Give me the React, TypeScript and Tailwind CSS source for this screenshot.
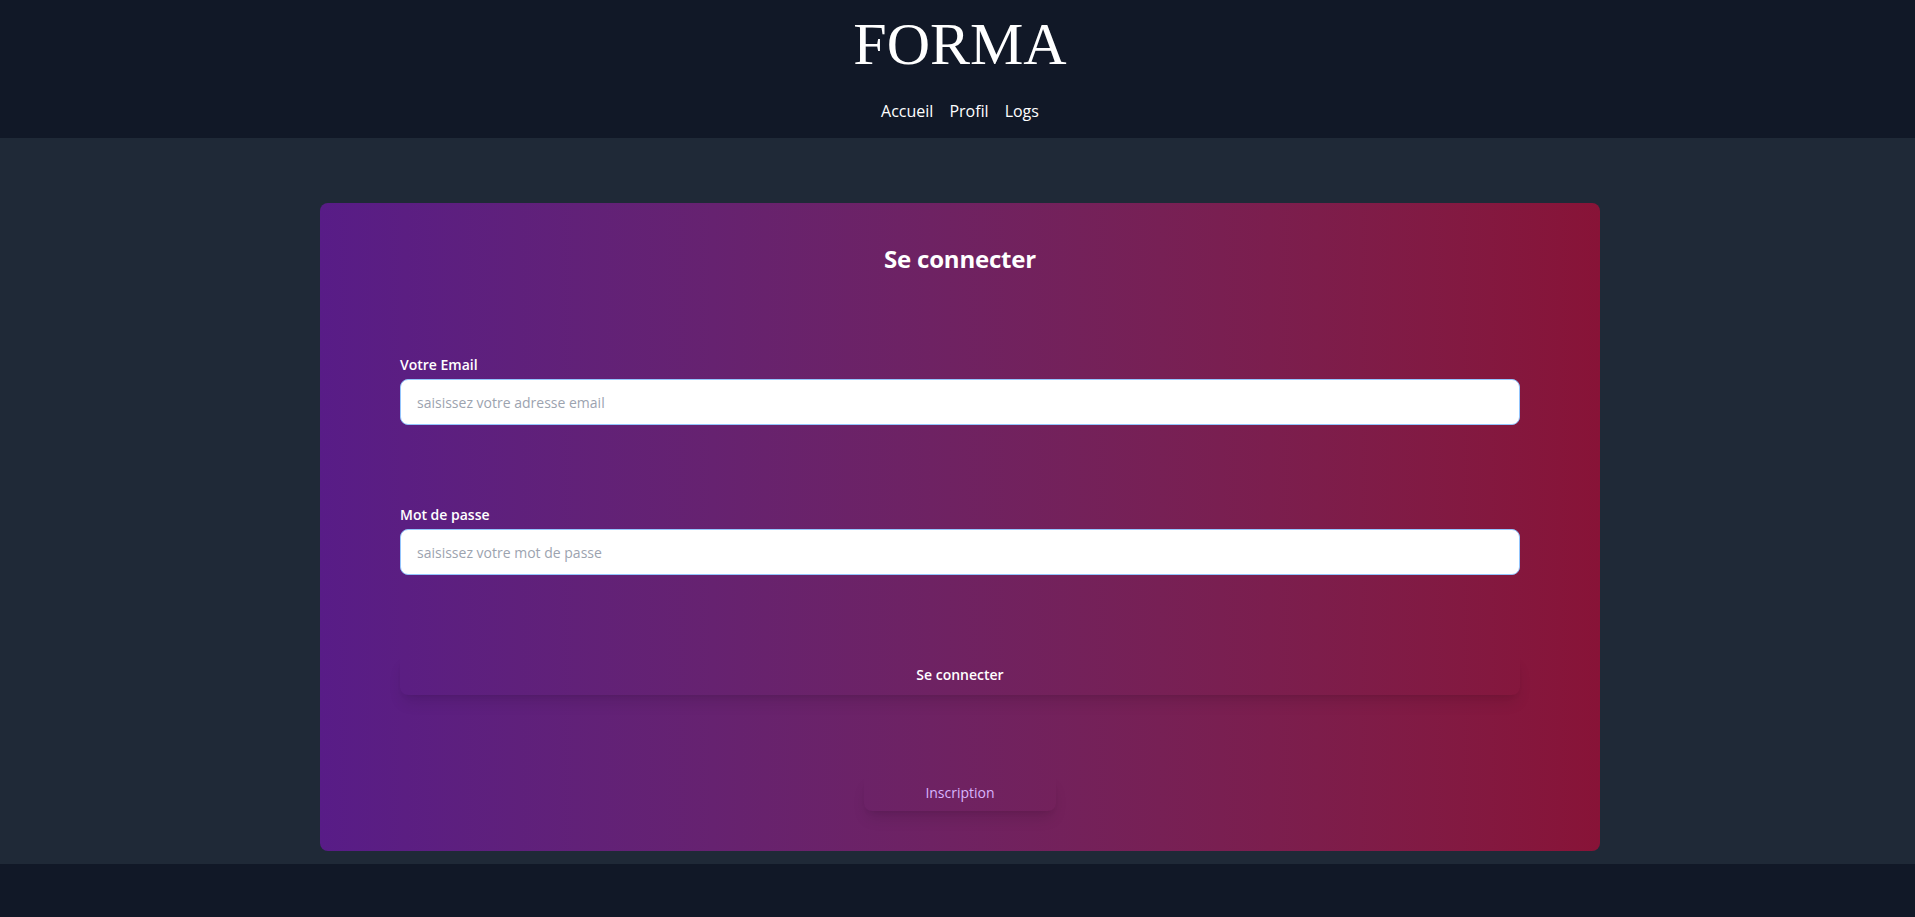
import React from "react";

const App: React.FC = () => {
  return (
    <div className="min-h-screen flex flex-col bg-[#111827] font-['Open_Sans',sans-serif]">
      <header className="bg-[#111827] text-white pl-[5px] pt-[14px] pb-[15px] text-center">
        <h1 className="text-[60px] leading-[60px] font-['Liberation_Serif',serif]">FORMA</h1>
        <nav className="mt-[25px] flex justify-center gap-4 text-base leading-6">
          <a href="#" className="hover:underline">Accueil</a>
          <a href="#" className="hover:underline">Profil</a>
          <a href="#" className="hover:underline">Logs</a>
        </nav>
      </header>

      <main className="bg-[#1f2937] pl-[5px] pt-[65px] pb-[13px]">
        <div className="max-w-7xl mx-auto rounded-lg bg-gradient-to-r from-[#581c87] to-[#881337] px-20 pt-10 pb-10">
          <h2 className="text-2xl leading-8 font-bold text-white text-center tracking-[-0.2px]">Se connecter</h2>

          <form className="mt-20 flex flex-col">
            <label className="text-sm leading-5 font-semibold text-white mb-1">Votre Email</label>
            <input
              type="email"
              placeholder="saisissez votre adresse email"
              className="h-[46px] w-full rounded-lg bg-white border border-[#93c5fd] px-4 text-sm text-gray-800 placeholder:text-[#9ca3af] outline-none"
            />

            <label className="mt-20 text-sm leading-5 font-semibold text-white mb-1">Mot de passe</label>
            <input
              type="password"
              placeholder="saisissez votre mot de passe"
              className="h-[46px] w-full rounded-lg bg-white border border-[#93c5fd] px-4 text-sm text-gray-800 placeholder:text-[#9ca3af] outline-none"
            />

            <button
              type="button"
              className="mt-20 h-10 w-full rounded-lg text-sm font-semibold text-white shadow-lg"
            >
              Se connecter
            </button>

            <button
              type="button"
              className="mt-20 mx-auto h-9 w-48 rounded-lg text-sm text-[#d8b4fe] shadow-lg"
            >
              Inscription
            </button>
          </form>
        </div>
      </main>

      <footer className="flex-1 bg-[#111827]" />
    </div>
  );
};

export default App;
